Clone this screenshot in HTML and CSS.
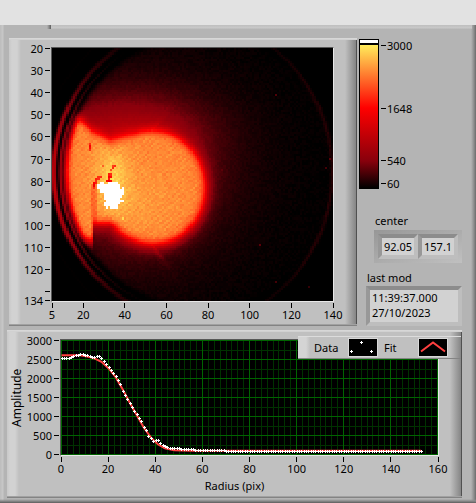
FILE: index.html
```html
<!DOCTYPE html>
<html lang="en">
<head>
    <meta charset="UTF-8">
    <meta name="viewport" content="width=device-width, initial-scale=1.0">
    <title>Beam profile</title>
    <link rel="stylesheet" href="styles.css">
</head>
<body>
    <div class="toolbar"></div>
    <main class="page">
        <div class="page-edge"><span class="tab-end"></span><span class="edge-line"></span></div>

        <div class="top-row">
            <section class="panel image-panel">
                <svg class="axis axis-y" id="imageY"></svg>
                <canvas class="plot image" id="image" width="136" height="115"></canvas>
                <svg class="axis axis-x" id="imageX"></svg>
            </section>

            <aside class="side">
                <div class="scale-row">
                    <div class="color-bar"><div class="over"></div><div class="ramp"></div></div>
                    <svg class="axis color-axis" id="colorAxis"></svg>
                    <div class="readouts">
                        <label for="intensity">intensity</label>
                        <input class="field small" type="text" id="intensity" value="630">
                        <label class="second" for="radius">radius</label>
                        <input class="field small" type="text" id="radius" value="67">
                    </div>
                </div>
                <div class="center-group">
                    <label for="centerX">center</label>
                    <div class="cluster">
                        <input class="field" type="text" id="centerX" value="92.052">
                        <input class="field" type="text" id="centerY" aria-label="center y" value="157.12">
                    </div>
                </div>
                <div class="mod-group">
                    <label for="lastMod">last mod</label>
                    <textarea class="field stamp" id="lastMod" rows="2" readonly>11:39:37.000
27/10/2023</textarea>
                </div>
            </aside>
        </div>

        <section class="panel chart-panel">
            <div class="title-y">Amplitude</div>
            <svg class="axis axis-y" id="chartY"></svg>
            <svg class="plot chart" id="chart" viewBox="0 0 377 115" preserveAspectRatio="none"></svg>
            <svg class="axis axis-x" id="chartX"></svg>
            <div class="title-x">Radius (pix)</div>
            <div class="legend">
                <span class="legend-name data-name">Data</span>
                <svg class="swatch" width="28" height="17" viewBox="0 0 28 17">
                    <path d="M1 12.5h3M2.5 11v3M11 3.5h3M12.5 2v3M21 12.5h3M22.5 11v3" stroke="#fff"/>
                </svg>
                <span class="legend-name fit-name">Fit</span>
                <svg class="swatch" width="28" height="17" viewBox="0 0 28 17">
                    <path d="M2 12.5L14 3.5L26 12.5" fill="none" stroke="#ff4040" stroke-width="2"/>
                </svg>
            </div>
        </section>
    </main>
    <script src="script.js"></script>
</body>
</html>
```
FILE: styles.css
```css
* {
    box-sizing: border-box;
}
body {
    margin: 0;
    background: #b4b4b4;
    color: #000;
    font-family: "Noto Sans", "Open Sans", sans-serif;
    font-size: 11px;
    line-height: 16px;
}
.toolbar {
    height: 25px;
    background: #e2e2e2;
}
.page {
    padding: 0 14px 5px 7px;
    background:
        linear-gradient(to top, #5c5c5c, #8c8c8c 2px, transparent 4px),
        linear-gradient(to left, #6c6c6c, #8c8c8c 2px, transparent 5px),
        linear-gradient(to right, #bcbcbc, #c8c8c8 3px, transparent 4px),
        #b4b4b4;
}
.page-edge {
    display: flex;
    height: 4px;
    margin: 0 -10px 9px -3px;
}
.tab-end {
    width: 47px;
    background: linear-gradient(to left, #5c5c5c, #8c8c8c 2px, #b4b4b4 4px);
}
.edge-line {
    flex: 1;
    background: linear-gradient(#bebebe, #c9c9c9 3px, #b4b4b4);
}
.top-row {
    display: flex;
    margin: 0 0 4px 2px;
}
.panel {
    display: grid;
    background:
        linear-gradient(#dadada, #cecece) top / 100% 2px no-repeat,
        linear-gradient(#b0b0b0, #747474) bottom / 100% 2px no-repeat,
        linear-gradient(to left, #505050 1px, #858585 1px, #c0c0c0 12px) right / 12px 100% no-repeat,
        linear-gradient(to right, #c8c8c8, #d2d2d2 3px, #d2d2d2 8px, #c0c0c0) left / 12px 100% no-repeat,
        #c0c0c0;
}
.image-panel {
    flex: 1;
    min-width: 0;
    grid-template-columns: 42px 1fr;
    grid-template-rows: 255px 24px;
    padding: 9px 23px 0 0;
}
.plot {
    width: 100%;
    height: 100%;
    background: #000;
    border: 1px solid;
    border-color: #585858 #e8e8e8 #e8e8e8 #585858;
    min-width: 0;
}
.image {
    image-rendering: pixelated;
}
.axis {
    display: block;
    overflow: visible;
}
.axis text {
    font-size: 11px;
}
.axis line {
    stroke: #000;
    shape-rendering: crispEdges;
}
.axis-y {
    width: 100%;
    height: 100%;
}
.axis-x {
    grid-column: -2;
    width: calc(100% - 2px);
    height: 20px;
    margin-left: 1px;
}
.side {
    flex: 0 0 105px;
    min-width: 0;
    padding-top: 1px;
}
.scale-row {
    display: flex;
    height: 150px;
    padding-left: 2px;
}
.color-bar {
    flex: 0 0 20px;
    display: flex;
    flex-direction: column;
    border: 1px solid #000;
}
.over {
    height: 5px;
    background: #fff;
    border-bottom: 2px solid #000;
}
.ramp {
    flex: 1;
    background: linear-gradient(#ffec5a, #f00 44%, #88000c 81%, #000);
}
.color-axis {
    flex: 0 0 33px;
    height: 150px;
}
.readouts {
    flex: 1;
    min-width: 0;
    display: flex;
    flex-direction: column;
    align-items: flex-end;
    padding-top: 22px;
}
.readouts label {
    padding-right: 3px;
}
.readouts .second {
    margin-top: 8px;
}
.field {
    min-width: 0;
    margin: 0;
    padding: 0 2px;
    border: 4px solid;
    border-color: #8c8c8c #bebebe #bebebe #989898;
    border-radius: 0;
    background: #d2d2d2;
    color: #000;
    font: inherit;
    outline: none;
}
.small {
    width: 38px;
    height: 25px;
}
.center-group {
    margin: 24px 0 7px 17px;
}
.center-group label,
.mod-group label {
    display: block;
    padding-left: 1px;
}
.cluster {
    display: flex;
    margin-top: 1px;
    padding: 4px;
    background: linear-gradient(to bottom right, #979797, #c0c0c0);
}
.cluster .field {
    flex: 1;
    width: 100%;
    height: 25px;
}
.mod-group {
    margin-left: 9px;
}
.stamp {
    display: block;
    width: 100%;
    height: 40px;
    line-height: 15px;
    resize: none;
    overflow: hidden;
}
.chart-panel {
    position: relative;
    grid-template-columns: 20px 33px 1fr;
    grid-template-rows: 117px 20px 22px;
    padding: 9px 23px 0 0;
}
.title-y {
    writing-mode: vertical-rl;
    transform: rotate(180deg);
    text-align: center;
    font-size: 12px;
    line-height: 20px;
}
.title-x {
    grid-column: 3;
    line-height: 20px;
    text-align: center;
    padding-right: 30px;
}
.legend {
    position: absolute;
    top: 6px;
    right: 1px;
    width: 163px;
    height: 23px;
    display: flex;
    align-items: center;
    padding-left: 16px;
    background:
        linear-gradient(#dcdcdc, #dcdcdc) top / 100% 1px no-repeat,
        linear-gradient(#848484, #848484) bottom / 100% 1px no-repeat,
        linear-gradient(to left, #858585, #c0c0c0 11px) right / 11px 100% no-repeat,
        linear-gradient(to right, #d4d4d4 8px, #c0c0c0) left / 12px 100% no-repeat,
        #c0c0c0;
}
.data-name {
    width: 35px;
}
.fit-name {
    width: 42px;
    padding-left: 7px;
}
.swatch {
    flex: none;
    background: #000;
    outline: 1px solid #d8d8d8;
}
```
FILE: script.js
```js
const NS = 'http://www.w3.org/2000/svg';

function add(svg, name, attrs, text) {
    const el = document.createElementNS(NS, name);
    for (const key in attrs) el.setAttribute(key, attrs[key]);
    if (text !== undefined) el.textContent = text;
    svg.appendChild(el);
}

function axisX(id, min, max, ticks) {
    const svg = document.getElementById(id);
    ticks.forEach(v => {
        const x = (v - min) / (max - min) * 100 + '%';
        add(svg, 'line', { x1: x, x2: x, y1: 1, y2: 6 });
        add(svg, 'text', { x: x, y: 17, 'text-anchor': 'middle' }, v);
    });
}

function axisY(id, min, max, ticks, height, right) {
    const svg = document.getElementById(id);
    ticks.forEach(v => {
        const y = Math.round((v - min) / (max - min) * (height - 1)) + 1.5;
        add(svg, 'line', { x1: right + 2, x2: right + 7, y1: y, y2: y });
        if (v !== 130) add(svg, 'text', { x: right, y: y + 4, 'text-anchor': 'end' }, v);
    });
}

axisX('imageX', 5, 140, [5, 20, 40, 60, 80, 100, 120, 140]);
axisY('imageY', 20, 134, [20, 30, 40, 50, 60, 70, 80, 90, 100, 110, 120, 130, 134], 253, 34);
axisX('chartX', 0, 160, [0, 20, 40, 60, 80, 100, 120, 140, 160]);
axisY('chartY', 3000, 0, [3000, 2500, 2000, 1500, 1000, 500, 0], 115, 25);

const colorAxis = document.getElementById('colorAxis');
[[3000, 6.5], [1648, 69.5], [540, 121.5], [60, 144.5]].forEach(([v, y]) => {
    add(colorAxis, 'line', { x1: 2, x2: 7, y1: y, y2: y });
    add(colorAxis, 'text', { x: 8, y: y + 4 }, v);
});

// camera image
let seed = 7;
function random() {
    seed = (seed * 16807) % 2147483647;
    return seed / 2147483647;
}
const sigmoid = t => 1 / (1 + Math.exp(-t));
const bell = t => Math.exp(-t * t);

function interpolate(points, r) {
    let k = 1;
    while (k < points.length - 1 && r > points[k][0]) k++;
    const [x0, y0] = points[k - 1], [x1, y1] = points[k];
    return y0 + (y1 - y0) * (r - x0) / (x1 - x0);
}

const stops = [[60, 0, 0, 0], [540, 136, 0, 12], [1648, 255, 0, 0], [3000, 255, 236, 90]];
function color(v) {
    if (v > 3000) return [255, 255, 255];
    if (v <= 60) return [0, 0, 0];
    let k = 1;
    while (v > stops[k][0]) k++;
    const a = stops[k - 1], b = stops[k];
    const t = (v - a[0]) / (b[0] - a[0]);
    return [1, 2, 3].map(c => a[c] + (b[c] - a[c]) * t);
}

const upper = [[13, 62], [25, 70], [40, 85], [58, 95], [72, 91], [95, 86]];
const lower = [[41, 174], [58, 174], [70, 181], [95, 193]];

function level(x, y) {
    const d = Math.hypot(x - 151, y - 124);
    const inside = sigmoid((137 - d) / 1.7);
    const disk = (1 - Math.hypot((x - 101) / 51, (y - 140) / 55)) * 51;
    const top = (y - interpolate(upper, x)) * 0.85;
    const bottom = (x < 41 ? 191 : interpolate(lower, x)) - y;
    const lobe = Math.min(top, bottom, 100 - x);
    const s = Math.max(disk, lobe);
    let core = 2380 * sigmoid((s + 1) / 2.8);
    if (s > 4) {
        core += Math.sin((x + y * 1.2) * 0.9) * 55;
        core += 110 * bell((x - 85) / 35) * bell((y - 155) / 30);
    }
    core += 400 * bell((x - 60) / 17) * bell((y - 130) / 34) * sigmoid((s - 4) / 3);
    if (x > 40 && x < 45 && y > 137) core -= 280 * sigmoid(s / 3);
    const halo = 720 * bell((x - 72) / 76) * bell((y - 92) / (y < 92 ? 42 : 85));
    const rim = 420 * Math.exp(-Math.max(0, -s) / 7);
    const haze = 170 * bell((x - 80) / 130) * bell((y - 120) / 125);
    let v = (core + (halo + rim + haze) * (1 - sigmoid(s / 3)) + 45) * inside;
    v += (random() - 0.5) * (s > 3 ? 150 : 55) * inside;
    if (x < 110) {
        const glow = bell((y - 132) / 82);
        v += (1050 * bell((d - 149) / 2.2) + 650 * bell((d - 142.5) / 1.5)) * glow;
        v += 110 * bell((d - 151) / 2.5) + 70 * bell((d - 165) / 3);
    } else {
        const e = Math.hypot((x - 145) / 135, (y - 124) / 150);
        v += 125 * bell((e - 1) / 0.015);
    }
    return v;
}

const canvas = document.getElementById('image');
const ctx = canvas.getContext('2d');
const cols = canvas.width, rows = canvas.height;
const field = [];
for (let j = 0; j < rows; j++) {
    for (let i = 0; i < cols; i++) {
        field.push(level((i + 0.5) * 281 / cols, (j + 0.5) * 253 / rows));
    }
}

// saturated spot: row, first column, last column
[[61, 23, 24], [61, 27, 31], [62, 22, 32], [63, 22, 32], [63, 34, 34], [64, 23, 34],
 [65, 23, 34], [66, 25, 34], [67, 25, 33], [68, 25, 32], [69, 26, 33], [69, 34, 34],
 [70, 25, 32], [71, 25, 31], [72, 26, 26], [72, 28, 31], [77, 34, 34]].forEach(([j, from, to]) => {
    for (let i = from; i <= to; i++) field[j * cols + i] = j > 75 ? 2900 : 4000;
});
// dark streaks and hot pixels: column, row, level
[[29, 53, 2000], [30, 53, 1900], [29, 54, 1900], [24, 53, 2200], [28, 55, 2100], [27, 57, 1800],
 [28, 57, 1900], [27, 58, 1600], [28, 58, 1700], [27, 59, 1800], [26, 60, 1700], [27, 60, 1500],
 [28, 60, 1700], [22, 58, 1900], [23, 58, 1900], [21, 59, 1800], [22, 59, 1900], [21, 60, 1900],
 [20, 61, 1600], [21, 61, 1800], [20, 62, 1500], [20, 63, 1900], [18, 43, 1900], [18, 44, 1600],
 [18, 45, 1700], [18, 46, 1900], [82, 55, 380], [108, 21, 350], [134, 50, 380], [132, 54, 300],
 [100, 89, 380], [108, 106, 300], [124, 108, 250]].forEach(([i, j, v]) => {
    field[j * cols + i] = v;
});

const pixels = ctx.createImageData(cols, rows);
field.forEach((v, n) => pixels.data.set([...color(v), 255], n * 4));
ctx.putImageData(pixels, 0, 0);

// radial profile
const chart = document.getElementById('chart');
const px = v => v * 2.35 + 0.5;
const py = v => 114.5 - v * 0.038;

let minor = '', major = '';
for (let r = 0; r <= 160; r += 2.5) {
    const seg = 'M' + (Math.round(r * 2.35) + 0.5) + ' 0V115';
    if (r % 20) minor += seg; else major += seg;
}
for (let a = 0; a <= 3000; a += 250) {
    const seg = 'M0 ' + (Math.round(114 - a * 0.038) + 0.5) + 'H377';
    if (a % 500) minor += seg; else major += seg;
}
add(chart, 'path', { d: minor, stroke: '#003200', fill: 'none' });
add(chart, 'path', { d: major, stroke: '#006400', fill: 'none' });

const fit = [[0, 2615], [8, 2610], [11, 2580], [14, 2530], [17, 2440], [20, 2270], [23, 2040],
    [26, 1720], [29, 1370], [32, 1040], [35, 710], [38, 450], [41, 270], [44, 160], [48, 115],
    [55, 100], [153, 100]];
const data = [[0, 2520], [3, 2520], [6, 2600], [9, 2630], [11, 2600], [13, 2560], [14, 2550],
    [15, 2590], [16, 2590], [18, 2440], [20, 2280], [22, 2140], [24, 1940], [25, 1830], [26, 1660],
    [28, 1450], [30, 1230], [32, 1050], [34, 860], [35, 710], [36, 620], [37, 480], [39, 345],
    [41, 370], [43, 230], [46, 150], [50, 145], [58, 110], [66, 105], [72, 85], [153, 75]];

add(chart, 'polyline', {
    points: fit.map(([r, a]) => px(r) + ',' + py(a)).join(' '),
    fill: 'none', stroke: '#ff4040', 'stroke-width': 2
});
let marks = '';
for (let r = 0; r <= 153; r++) {
    const x = Math.round(px(r)), y = Math.round(py(interpolate(data, r)) - 0.5) + 0.5;
    marks += 'M' + (x - 1) + ' ' + y + 'h3M' + (x + 0.5) + ' ' + (y - 1.5) + 'v3';
}
add(chart, 'path', { d: marks, stroke: '#fff', fill: 'none', 'shape-rendering': 'crispEdges' });
```
